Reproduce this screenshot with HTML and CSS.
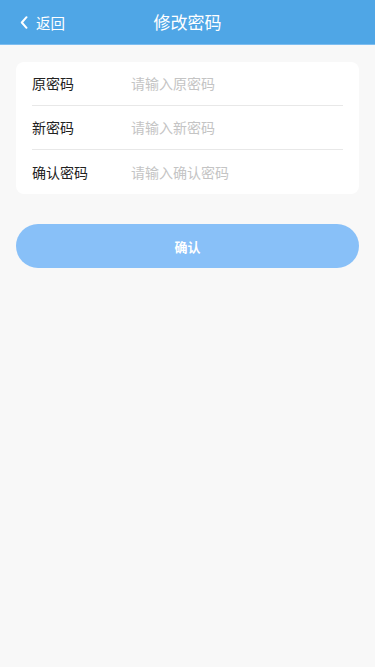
FILE: index.html
```html
<!DOCTYPE html>
<html lang="zh">
<head>
<meta charset="utf-8">
<meta name="viewport" content="width=device-width, initial-scale=1">
<link rel="stylesheet" href="styles.css">
</head>
<body>
<header class="nav">
  <div class="nav-back">
    <svg class="chev" width="8" height="13" viewBox="0 0 8 13"><path d="M6.5 1.2 L1.8 6.5 L6.5 11.8" fill="none" stroke="#fff" stroke-width="2" stroke-linecap="round" stroke-linejoin="round"/></svg>
    <span>返回</span>
  </div>
  <div class="nav-title">修改密码</div>
</header>
<main class="content">
  <div class="card">
    <div class="row"><span class="label">原密码</span><span class="ph">请输入原密码</span></div>
    <div class="row"><span class="label">新密码</span><span class="ph">请输入新密码</span></div>
    <div class="row"><span class="label">确认密码</span><span class="ph">请输入确认密码</span></div>
  </div>
  <button class="btn">确认</button>
</main>
</body>
</html>
```
FILE: styles.css
```css
* { box-sizing: border-box; }
html, body { margin: 0; padding: 0; }
body {
  background: #f8f8f8;
  font-family: "Noto Sans CJK SC", "Noto Sans", sans-serif;
  min-height: 667px;
}
.nav {
  height: 45px;
  background: #4fa6e6;
  border-bottom: 1px solid #7dbdf0;
  display: flex;
  align-items: center;
  justify-content: center;
  position: relative;
  color: #fff;
}
.nav-back {
  position: absolute;
  left: 20px;
  top: 0;
  height: 44px;
  display: flex;
  align-items: center;
  gap: 8px;
  font-size: 14.5px;
}
.chev { display: block; }
.nav-title {
  font-size: 17px;
  line-height: 44px;
}
.content {
  padding: 17px 16px 0;
}
.card {
  background: #fff;
  border-radius: 8px;
  padding: 0 16px;
}
.row {
  height: 44px;
  display: flex;
  align-items: center;
  border-bottom: 1px solid #e8e8e8;
  font-size: 14px;
  line-height: 20px;
  padding-bottom: 1px;
}
.row:last-child { border-bottom: none; }
.label {
  width: 99px;
  color: #222;
}
.ph { color: #c4c4c4; }
.btn {
  display: block;
  width: 100%;
  height: 44px;
  margin-top: 30px;
  border: none;
  border-radius: 22px;
  background: #88c0f8;
  color: #fff;
  font-family: inherit;
  font-size: 13px;
  font-weight: bold;
}
```
